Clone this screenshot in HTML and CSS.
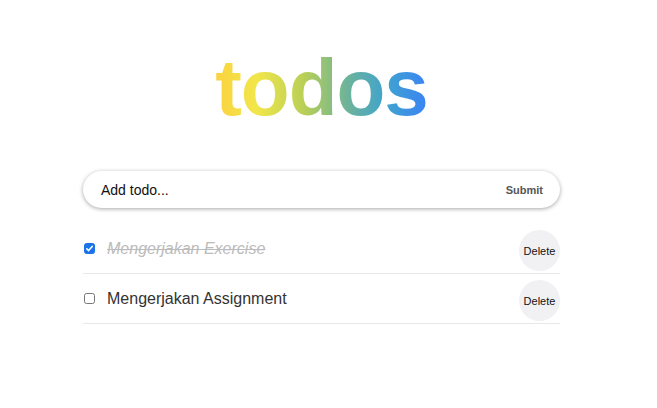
FILE: index.html
```html
<!DOCTYPE html>
<html>
<head>
<meta charset="utf-8">
<link rel="stylesheet" href="styles.css">
</head>
<body>
<div class="page">
  <main class="app">
    <h1 class="title">todos</h1>
    <form class="add">
      <span class="add-input">Add todo...</span>
      <span class="add-submit">Submit</span>
    </form>
    <ul class="list">
      <li class="item">
        <span class="check"><svg viewBox="0 0 11 11" width="11" height="11"><rect x="0.5" y="0.5" width="10" height="10" rx="2" fill="#1a73e8" stroke="#1a73e8"/><path d="M2.8 5.8 L4.6 7.6 L8.2 3.4" fill="none" stroke="#fff" stroke-width="1.6" stroke-linecap="round" stroke-linejoin="round"/></svg></span>
        <span class="label done">Mengerjakan Exercise</span>
        <span class="delete">Delete</span>
      </li>
      <li class="item">
        <span class="check"><svg viewBox="0 0 11 11" width="11" height="11"><rect x="0.5" y="0.5" width="10" height="10" rx="2" fill="#fff" stroke="#777"/></svg></span>
        <span class="label">Mengerjakan Assignment</span>
        <span class="delete">Delete</span>
      </li>
    </ul>
  </main>
</div>
</body>
</html>
```
FILE: styles.css
```css
html, body { margin: 0; padding: 0; background: #fff; }
body { font-family: "Liberation Sans", Arial, sans-serif; color: #222; }
.page { padding-right: 14px; }
.app { width: 477px; margin: 0 auto; }
.title {
  margin: 0;
  padding-top: 42px;
  height: 130px;
  box-sizing: border-box;
  text-align: center;
  font-size: 80px;
  font-weight: 700;
  line-height: 92px;
  letter-spacing: -1px;
  background: linear-gradient(to right, #fbd23f 0%, #f1e64a 20%, #b8cf57 42%, #6db39a 62%, #3fa3cf 80%, #3b82f6 100%);
  background-size: 215px 100%;
  background-position: center;
  background-repeat: no-repeat;
  -webkit-background-clip: text;
  background-clip: text;
  color: transparent;
}
.add {
  margin-top: 41px;
  height: 37px;
  border-radius: 19px;
  box-shadow: 0 1px 4px rgba(0,0,0,0.35);
  display: flex;
  align-items: center;
  justify-content: space-between;
  padding: 0 17px 0 18px;
}
.add-input { font-size: 14px; color: #111; }
.add-submit { font-size: 11px; font-weight: 700; color: #555; }
.list { list-style: none; margin: 16px 0 0; padding: 0; }
.item {
  height: 50px;
  display: flex;
  align-items: center;
  border-bottom: 1px solid #e8e8e8;
  box-sizing: border-box;
}
.check { width: 11px; height: 11px; margin-left: 1px; display: flex; }
.label { margin-left: 12px; font-size: 16px; color: #333; flex: 1; }
.label.done { color: #bbb; font-style: italic; text-decoration: line-through; }
.delete {
  width: 41px; height: 41px;
  border-radius: 50%;
  background: #f1f1f3;
  display: flex; align-items: center; justify-content: center;
  font-size: 11px; color: #111;
  margin-top: 4px;
}
```
